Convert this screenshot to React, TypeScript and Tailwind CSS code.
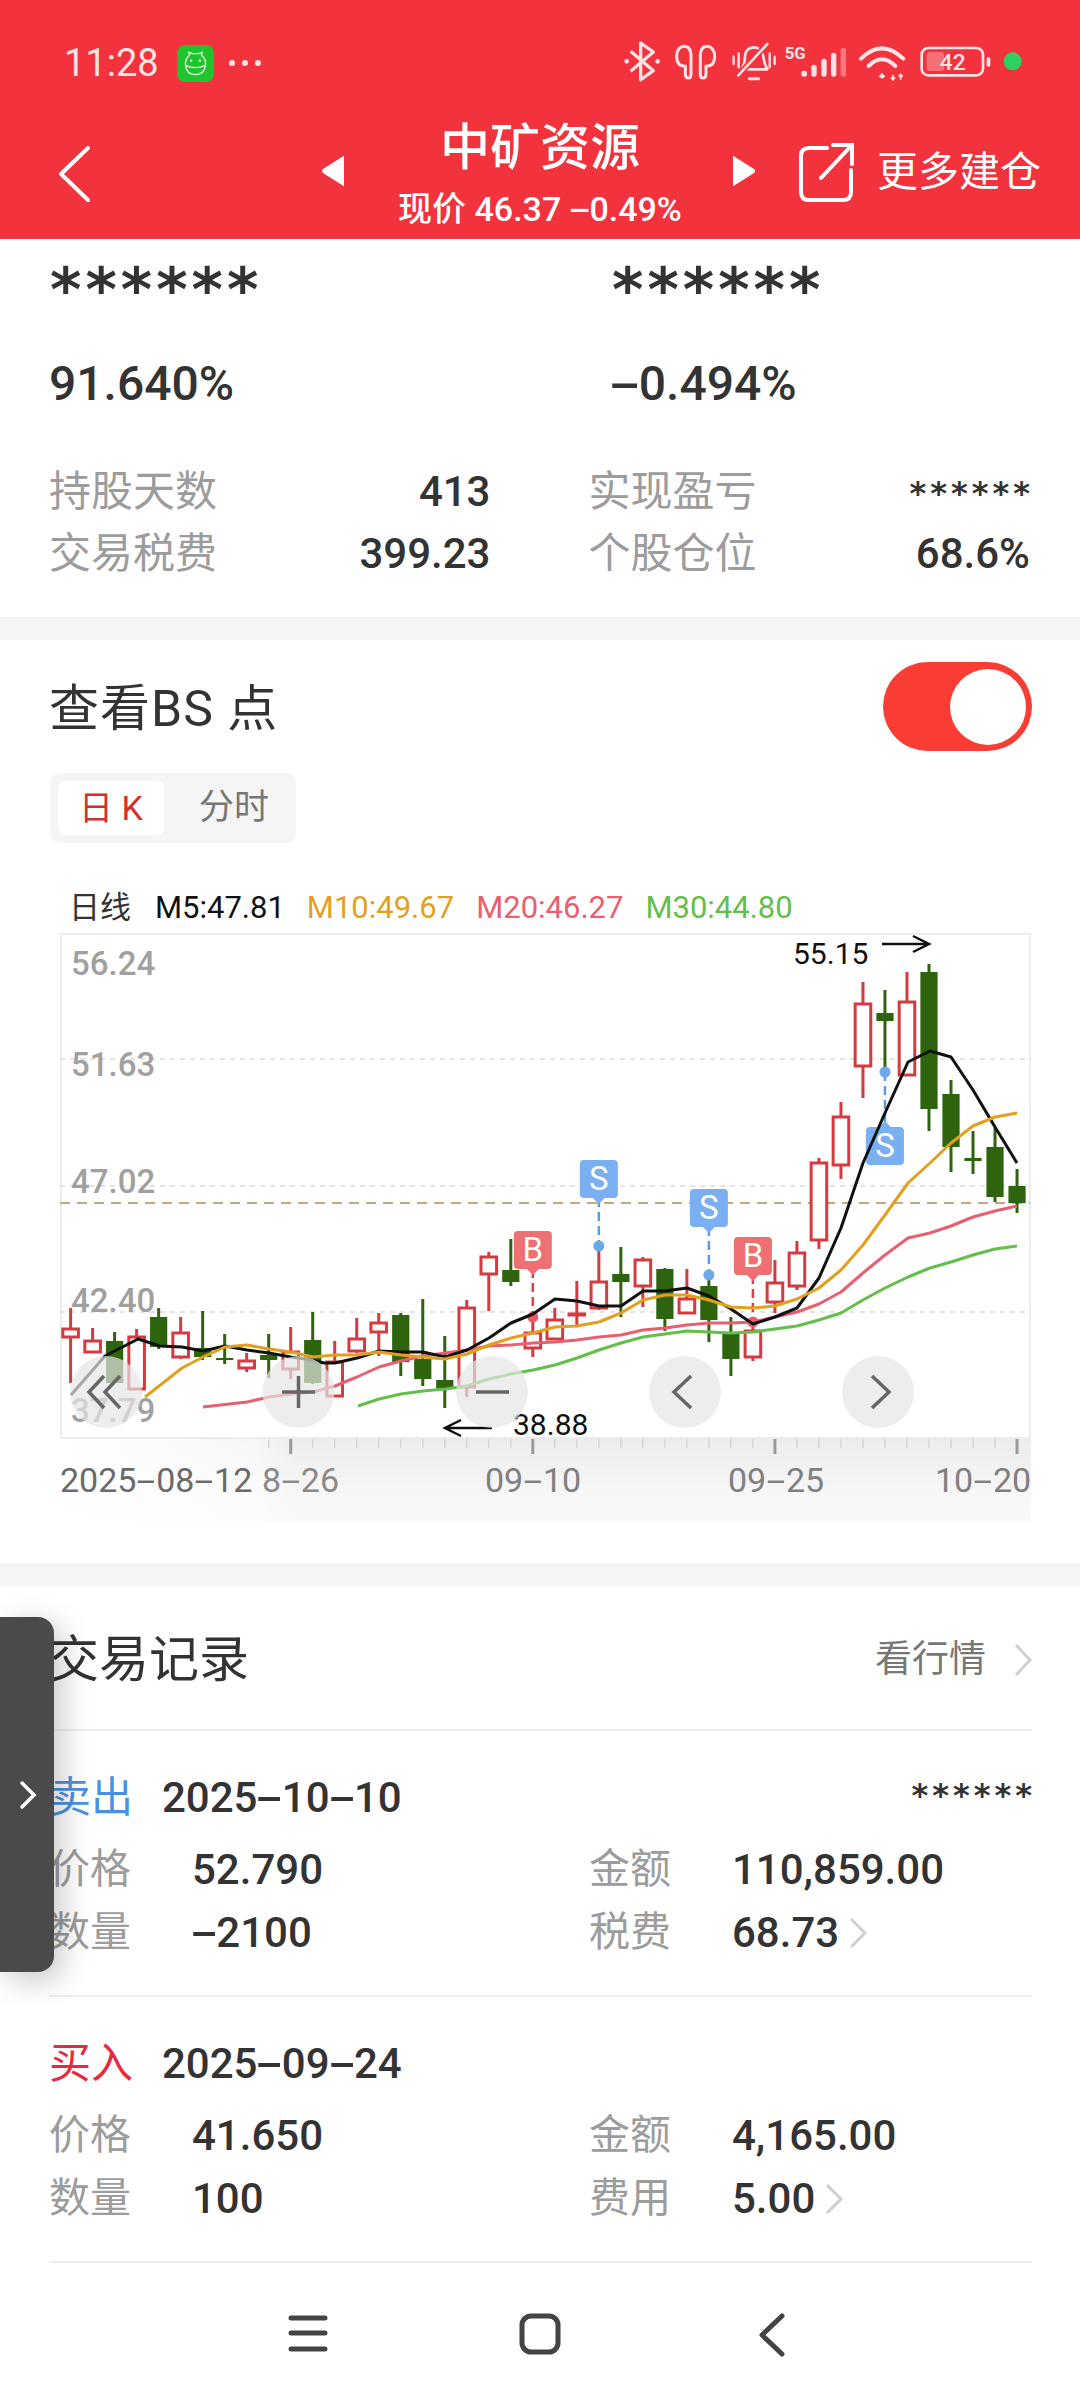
import { Fragment } from 'react'

type Candle = { up: boolean; wick: [number, number]; body: [number, number] }

const CANDLE_X0 = 70.6
const CANDLE_STEP = 22.01
const candleX = (i: number) => CANDLE_X0 + i * CANDLE_STEP

// [up, wick top, wick bottom, body top, body bottom] in page pixels
const rawCandles: [boolean, number, number, number, number][] = [
  [true, 1308, 1383, 1329, 1337],
  [true, 1328, 1353, 1341, 1352],
  [false, 1332, 1383, 1341, 1383],
  [true, 1329, 1389, 1337, 1389],
  [false, 1308, 1349, 1317, 1347],
  [true, 1317, 1359, 1333, 1357],
  [false, 1311, 1360, 1348, 1357],
  [false, 1334, 1364, 1358, 1360],
  [true, 1353, 1372, 1361, 1368],
  [false, 1334, 1378, 1355, 1360],
  [true, 1327, 1379, 1352, 1369],
  [false, 1312, 1384, 1340, 1383],
  [true, 1341, 1396, 1362, 1396],
  [true, 1318, 1353, 1339, 1351],
  [true, 1313, 1356, 1323, 1332],
  [false, 1313, 1376, 1315, 1362],
  [false, 1299, 1386, 1359, 1379],
  [false, 1336, 1408, 1380, 1389],
  [true, 1300, 1397, 1308, 1387],
  [true, 1252, 1311, 1257, 1274],
  [false, 1239, 1286, 1270, 1282],
  [true, 1317, 1357, 1333, 1348],
  [true, 1308, 1340, 1320, 1339],
  [true, 1281, 1325, 1314, 1315],
  [true, 1247, 1310, 1282, 1308],
  [false, 1247, 1317, 1274, 1282],
  [true, 1257, 1307, 1260, 1286],
  [false, 1268, 1331, 1269, 1319],
  [true, 1269, 1314, 1299, 1313],
  [false, 1276, 1342, 1286, 1320],
  [false, 1317, 1376, 1333, 1359],
  [true, 1320, 1361, 1331, 1357],
  [true, 1260, 1313, 1283, 1302],
  [true, 1241, 1290, 1253, 1286],
  [true, 1158, 1249, 1163, 1240],
  [true, 1102, 1179, 1117, 1165],
  [true, 982, 1098, 1004, 1066],
  [false, 990, 1068, 1013, 1021],
  [true, 972, 1075, 1002, 1075],
  [false, 964, 1131, 972, 1109],
  [false, 1080, 1172, 1094, 1147],
  [false, 1131, 1174, 1158, 1161],
  [false, 1128, 1202, 1147, 1197],
  [false, 1169, 1213, 1186, 1203],
]

const candles: Candle[] = rawCandles.map(([up, a, b, c, d]) => ({ up, wick: [a, b], body: [c, d] }))

const m5 =
  '71,1395 105,1356 138,1339 160,1346 182,1347 203,1351 225,1346 247,1350 269,1353 291,1357 313,1360 324,1363 335,1363 357,1358 379,1351 401,1352 423,1352 445,1357 467,1350 489,1338 511,1323 533,1314 555,1299 577,1301 599,1306 621,1306 643,1291 665,1291 687,1288 709,1296 731,1309 753,1324 775,1317 797,1308 819,1278 841,1228 863,1163 885,1113 908,1062 930,1051 951,1057 973,1090 995,1127 1017,1163'
const m10 =
  '145,1397 182,1368 203,1357 225,1347 247,1345 269,1349 291,1352 313,1357 335,1355 357,1355 379,1352 401,1355 423,1357 445,1359 467,1354 489,1345 511,1338 533,1333 555,1327 577,1326 599,1322 621,1313 643,1300 665,1295 687,1295 709,1300 731,1307 753,1308 775,1306 797,1299 819,1288 841,1270 863,1245 885,1215 908,1183 930,1163 951,1143 973,1126 995,1117 1017,1113'
const m20 =
  '203,1407 247,1402 269,1397 291,1394 313,1392 335,1386 357,1377 379,1367 401,1361 423,1356 445,1353 467,1350 489,1346 511,1345 533,1343 555,1342 577,1340 599,1337 621,1335 643,1330 665,1328 687,1325 709,1323 731,1323 753,1322 775,1317 797,1312 819,1304 841,1292 863,1273 885,1255 908,1238 930,1233 951,1226 973,1217 995,1211 1017,1206'
const m30 =
  '358,1406 379,1399 401,1394 423,1391 445,1389 467,1386 489,1379 511,1374 533,1370 555,1365 577,1358 599,1350 621,1343 643,1337 665,1334 687,1331 709,1332 731,1333 753,1332 775,1329 797,1326 819,1320 841,1313 863,1300 885,1288 908,1277 930,1268 951,1262 973,1255 995,1249 1017,1246'

const priceLabels = [
  { text: '56.24', y: 975 },
  { text: '51.63', y: 1076 },
  { text: '47.02', y: 1193 },
  { text: '42.40', y: 1312 },
  { text: '37.79', y: 1422 },
]

// Widens the hyphens so numbers read like the app's DIN style face
function Hyphened({ text }: { text: string }) {
  return (
    <>
      {text.split('-').map((part, i) => (
        <Fragment key={i}>
          {i > 0 && <span className="inline-block w-[0.58em] scale-x-[2] text-center">-</span>}
          {part}
        </Fragment>
      ))}
    </>
  )
}

function FrogBadge() {
  return (
    <svg width="37" height="37" viewBox="405 47 110 111" fill="none">
      <rect x="405" y="47" width="110" height="111" rx="24" fill="#1fc62b" />
      <path
        d="M442 78 L440 69 L450 73 H470 L480 69 L478 78 Q492 90 490 108 Q486 136 460 136 Q434 136 430 108 Q428 90 442 78 Z"
        stroke="#e9fbe9"
        strokeWidth="4"
      />
      <path d="M430 108 Q460 122 490 108" stroke="#e9fbe9" strokeWidth="4" />
      <circle cx="447" cy="94" r="3.5" fill="#e9fbe9" />
      <circle cx="473" cy="94" r="3.5" fill="#e9fbe9" />
    </svg>
  )
}

function StatusIcons() {
  const c = '#fde3e5'
  return (
    <svg width="420" height="70" viewBox="0 0 1260 210" fill="none">
      {/* bluetooth */}
      <circle cx="50" cy="100" r="7" fill={c} />
      <circle cx="143" cy="100" r="7" fill={c} />
      <path d="M62 70 L130 128 L92 155 V45 L130 72 L62 130" stroke={c} strokeWidth="10" strokeLinejoin="round" />
      {/* earbuds */}
      <path
        d="M226 115 C206 115 200 100 200 85 C200 65 212 55 222 55 C238 55 243 70 243 85 V138 Q243 150 235 150 Q226 150 226 138 Z"
        stroke={c}
        strokeWidth="9"
      />
      <path
        d="M226 115 C206 115 200 100 200 85 C200 65 212 55 222 55 C238 55 243 70 243 85 V138 Q243 150 235 150 Q226 150 226 138 Z"
        stroke={c}
        strokeWidth="9"
        transform="translate(514 0) scale(-1 1)"
      />
      {/* muted bell */}
      <path d="M395 124 Q405 106 405 86 C405 66 420 58 432 58 C447 58 458 70 460 86 Q462 106 472 124 Z" stroke={c} strokeWidth="8" strokeLinejoin="round" />
      <path d="M418 152 H446" stroke={c} strokeWidth="9" strokeLinecap="round" />
      <path d="M385 142 L472 48" stroke="#f2323c" strokeWidth="18" />
      <path d="M385 142 L472 48" stroke={c} strokeWidth="8" strokeLinecap="round" />
      <path d="M371 86 V108 M386 76 V118 M479 76 V118 M494 86 V108" stroke={c} strokeWidth="7" strokeLinecap="round" />
      {/* cellular */}
      <text x="524" y="94" fontSize="50" fontWeight="700" fill={c}>
        5G
      </text>
      <rect x="574" y="128" width="17" height="18" rx="8" fill={c} />
      <rect x="604" y="110" width="16" height="36" rx="8" fill={c} />
      <rect x="634" y="92" width="16" height="54" rx="8" fill={c} />
      <rect x="663" y="74" width="16" height="72" rx="8" fill={c} />
      <rect x="692" y="60" width="16" height="86" rx="6" fill={c} fillOpacity="0.4" />
      {/* wifi */}
      <path d="M753 92 Q815 30 880 92" stroke={c} strokeWidth="12" strokeLinecap="round" />
      <path d="M776 114 Q815 74 856 114" stroke={c} strokeWidth="12" strokeLinecap="round" />
      <path d="M806 146 L816 134 L826 146 L816 152 Z" fill={c} />
      <path d="M849 140 V154 M843 148 L849 155 L855 148 M872 155 V140 M866 146 L872 139 L878 146" stroke={c} strokeWidth="5" />
      {/* battery */}
      <rect x="935" y="60" width="184" height="82" rx="20" stroke={c} strokeWidth="8" />
      <rect x="950" y="72" width="52" height="57" rx="8" fill={c} fillOpacity="0.35" />
      <text x="1028" y="127" fontSize="68" fontWeight="500" textAnchor="middle" fill={c}>
        42
      </text>
      <rect x="1130" y="87" width="11" height="29" rx="5" fill={c} />
      <circle cx="1208" cy="100" r="27" fill="#2fd063" />
    </svg>
  )
}

function Header() {
  return (
    <header className="h-[239px] w-full bg-[#f2323c] text-white">
      <div className="flex h-[126px] items-center pl-[64px] pr-[50px]">
        <span className="text-[38px] text-[#fde3e5]">11:28</span>
        <span className="ml-[18px] flex">
          <FrogBadge />
        </span>
        <span className="ml-[15px] flex gap-[7px]">
          <i className="size-[6px] rounded-full bg-[#fde3e5]" />
          <i className="size-[6px] rounded-full bg-[#fde3e5]" />
          <i className="size-[6px] rounded-full bg-[#fde3e5]" />
        </span>
        <span className="ml-auto flex">
          <StatusIcons />
        </span>
      </div>
      <div className="flex h-[113px] items-start">
        <svg className="ml-[58px] mt-[19px]" width="34" height="58" viewBox="0 0 34 58" fill="none">
          <path d="M30 3 L3 29 L30 55" stroke="#fff" strokeWidth="4" strokeLinecap="round" strokeLinejoin="round" />
        </svg>
        <svg className="ml-[228px] mt-[29px]" width="26" height="32" viewBox="0 0 26 32">
          <path d="M24 2 V30 Q24 32 22 30 L3 18 Q1 16 3 14 L22 2 Q24 0 24 2 Z" fill="#fff" />
        </svg>
        <div className="ml-[52px] flex w-[284px] flex-col items-center">
          <span className="h-[52px] text-[50px] font-medium leading-[44px]">中矿资源</span>
          <span className="mt-[9px] whitespace-nowrap text-[34px] font-medium leading-[44px]">
            现价 46.37 <Hyphened text="-0.49%" />
          </span>
        </div>
        <svg className="ml-[49px] mt-[29px]" width="26" height="32" viewBox="0 0 26 32">
          <path d="M2 2 V30 Q2 32 4 30 L23 18 Q25 16 23 14 L4 2 Q2 0 2 2 Z" fill="#fff" />
        </svg>
        <svg className="ml-[40px] mt-[16px]" width="60" height="62" viewBox="0 0 60 62" fill="none">
          <path d="M30 6 H12 Q4 6 4 14 V50 Q4 58 12 58 H46 Q54 58 54 50 V28" stroke="#fff" strokeWidth="4" strokeLinecap="round" />
          <path d="M24 36 L54 4 M36 3 H55 V22" stroke="#fff" strokeWidth="4" strokeLinecap="round" />
        </svg>
        <span className="ml-[20px] mt-[23px] whitespace-nowrap text-[41px] leading-[46px]">更多建仓</span>
      </div>
    </header>
  )
}

function Stars({ className }: { className: string }) {
  return <span className={`font-['DejaVu_Sans',sans-serif] ${className}`}>******</span>
}

function Metric({ label, value, stars }: { label: string; value?: string; stars?: boolean }) {
  return (
    <div className="flex h-[62px] items-center justify-between">
      <span className="text-[42px] text-[#9c9c9c]">{label}</span>
      {stars ? <Stars className="mr-[-4px] pt-[4px] text-[32px] font-bold tracking-[4px] text-[#333]" /> : <span className="text-[42px] font-medium text-[#333]">{value}</span>}
    </div>
  )
}

function Summary() {
  return (
    <section className="h-[378px] pt-[26px]">
      <div className="grid grid-cols-[562px_1fr] pl-[50px]">
        <Stars className="h-[50px] text-[60px] font-bold leading-[50px] tracking-[4px] text-[#333]" />
        <Stars className="h-[50px] text-[60px] font-bold leading-[50px] tracking-[4px] text-[#333]" />
      </div>
      <div className="mt-[33px] grid h-[60px] grid-cols-[562px_1fr] items-center pl-[49px] text-[48px] font-medium text-[#333]">
        <span>91.640%</span>
        <span>
          <Hyphened text="-0.494%" />
        </span>
      </div>
      <div className="mt-[52px] grid grid-cols-2 gap-x-[98px] pl-[49px] pr-[50px]">
        <Metric label="持股天数" value="413" />
        <Metric label="实现盈亏" stars />
        <Metric label="交易税费" value="399.23" />
        <Metric label="个股仓位" value="68.6%" />
      </div>
    </section>
  )
}

function BubbleMarker({
  i,
  letter,
  top,
  dotY,
  below,
}: {
  i: number
  letter: 'S' | 'B'
  top: number
  dotY: number
  below?: boolean
}) {
  const x = candleX(i)
  const fill = letter === 'S' ? '#7ab0f1' : '#ee7072'
  const line = letter === 'S' ? '#5a9be3' : '#d9404a'
  const dot = letter === 'S' ? '#6ea8ea' : '#ee5a66'
  return (
    <g>
      <path
        d={below ? `M${x} ${dotY} V${top}` : `M${x} ${top + 38} V${dotY}`}
        stroke={line}
        strokeWidth="2.5"
        strokeDasharray="9 5"
      />
      <circle cx={x} cy={dotY} r="5.5" fill={dot} />
      <rect x={x - 19} y={top} width="38" height="38" rx="4" fill={fill} />
      <path
        d={below ? `M${x - 7} ${top + 1} L${x} ${top - 6} L${x + 7} ${top + 1} Z` : `M${x - 7} ${top + 37} L${x} ${top + 44} L${x + 7} ${top + 37} Z`}
        fill={fill}
      />
      <text x={x} y={top + 30} textAnchor="middle" fontSize="33" fill="#fff">
        {letter}
      </text>
    </g>
  )
}

function RoundButton({ cx, d }: { cx: number; d: string }) {
  return (
    <g>
      <circle cx={cx} cy="1392" r="36" fill="#e6e6e6" fillOpacity="0.7" />
      <path d={d} stroke="#666" strokeWidth="3.5" fill="none" />
    </g>
  )
}

function KChart() {
  return (
    <svg className="block" width="1080" height="598" viewBox="0 932 1080 598" fill="none">
      <defs>
        <linearGradient id="stripV" x1="0" y1="0" x2="0" y2="1">
          <stop offset="0" stopColor="#ececec" />
          <stop offset="0.6" stopColor="#f6f6f6" />
          <stop offset="1" stopColor="#f9f9f9" />
        </linearGradient>
        <linearGradient id="stripFade" x1="0" y1="0" x2="1" y2="0">
          <stop offset="0" stopColor="#fff" />
          <stop offset="0.8" stopColor="#fff" stopOpacity="0.55" />
          <stop offset="1" stopColor="#fff" stopOpacity="0" />
        </linearGradient>
      </defs>

      <rect x="60" y="1438" width="971" height="84" fill="url(#stripV)" />
      <rect x="60" y="1438" width="240" height="84" fill="url(#stripFade)" />

      <rect x="61" y="934" width="969" height="504" fill="#fff" stroke="#ececec" strokeWidth="2" />
      <path d="M60 1059 H1030 M60 1186 H1030 M60 1312 H1030" stroke="#dcdcdc" strokeWidth="1.5" strokeDasharray="5 5" />
      <path d="M60 1203 H1030" stroke="#c4a882" strokeWidth="2" strokeDasharray="10 7" />

      {priceLabels.map((p) => (
        <text key={p.text} x="71" y={p.y} fontSize="33" fontWeight="500" fill="#a0a0a0">
          {p.text}
        </text>
      ))}

      {candles.map((c, i) => {
        const x = candleX(i)
        const color = c.up ? '#d43a3e' : '#2f640f'
        return (
          <g key={i}>
            <path d={`M${x} ${c.wick[0]} V${c.wick[1]}`} stroke={color} strokeWidth="3" />
            {c.up ? (
              <rect x={x - 7.8} y={c.body[0]} width="15.6" height={c.body[1] - c.body[0]} fill="#fff" stroke={color} strokeWidth="3" />
            ) : (
              <rect x={x - 8.6} y={c.body[0]} width="17.2" height={c.body[1] - c.body[0]} fill={color} />
            )}
          </g>
        )
      })}

      <BubbleMarker i={21} letter="B" top={1231} dotY={1317} />
      <BubbleMarker i={24} letter="S" top={1160} dotY={1246} />
      <BubbleMarker i={29} letter="S" top={1189} dotY={1275} />
      <BubbleMarker i={31} letter="B" top={1237} dotY={1322} />
      <BubbleMarker i={37} letter="S" top={1127} dotY={1072} below />

      <polyline points={m30} stroke="#63be4a" strokeWidth="3" strokeLinejoin="round" />
      <polyline points={m20} stroke="#e8606f" strokeWidth="3" strokeLinejoin="round" />
      <polyline points={m5} stroke="#111" strokeWidth="3" strokeLinejoin="round" />
      <polyline points={m10} stroke="#e3a01f" strokeWidth="3" strokeLinejoin="round" />

      {/* high / low callouts */}
      <text x="793" y="964" fontSize="30" fill="#111">
        55.15
      </text>
      <path d="M882 944 H928 M913 936 L929 944 L913 952" stroke="#111" strokeWidth="2.5" />
      <text x="513" y="1435" fontSize="30" fill="#111">
        38.88
      </text>
      <path d="M492 1428 H446 M461 1420 L445 1428 L461 1436" stroke="#111" strokeWidth="2.5" />

      {/* zoom and pan buttons */}
      <RoundButton cx={106} d="M104 1376 L89 1392 L104 1408 M120 1376 L105 1392 L120 1408" />
      <RoundButton cx={298.5} d="M282 1392 H315 M298.5 1376 V1408" />
      <RoundButton cx={492} d="M476 1392 H509" />
      <RoundButton cx={685} d="M691 1376 L674 1392 L691 1408" />
      <RoundButton cx={878} d="M872 1376 L889 1392 L872 1408" />

      {/* date ruler */}
      {candles.map((_, i) => {
        if (i < 9) return null
        const major = i === 10 || i === 21 || i === 32 || i === 43
        return (
          <path
            key={i}
            d={`M${candleX(i)} 1439 V${major ? 1454 : 1448}`}
            stroke={major ? '#999' : '#cfcfcf'}
            strokeWidth={major ? 3 : 1.2}
          />
        )
      })}
    </svg>
  )
}

function DateLabel({ text, className }: { text: string; className: string }) {
  return (
    <span className={`absolute top-[526px] whitespace-nowrap text-[34px] leading-[44px] ${className}`}>
      <Hyphened text={text} />
    </span>
  )
}

function BsSection() {
  return (
    <section className="h-[923px] pt-[22px]">
      <div className="flex h-[89px] items-center justify-between pl-[49px] pr-[48px]">
        <h2 className="pt-[5px] text-[50px] font-normal tracking-[1px] text-[#333]">查看BS 点</h2>
        <div className="flex h-[89px] w-[149px] items-center justify-end rounded-full bg-[#f93d35] pr-[6px]">
          <div className="size-[76px] rounded-full bg-white" />
        </div>
      </div>
      <div className="ml-[50px] mt-[22px] flex h-[70px] w-[246px] items-center rounded-[10px] bg-[#f5f5f5] pl-[8px]">
        <span className="flex h-[54px] w-[106px] items-center justify-center rounded-[8px] bg-white text-[34px] text-[#d32f2f]">日 K</span>
        <span className="ml-[35px] text-[35px] text-[#777]">分时</span>
      </div>
      <div className="ml-[69px] mt-[42px] flex h-[47px] items-center gap-[22px] whitespace-nowrap text-[31px]">
        <span className="mr-[2px] text-[31px] text-[#333]">日线</span>
        <span className="text-[#111]">M5:47.81</span>
        <span className="text-[#e3a01f]">M10:49.67</span>
        <span className="text-[#e8606f]">M20:46.27</span>
        <span className="text-[#63be4a]">M30:44.80</span>
      </div>
      <div className="relative">
        <KChart />
        <DateLabel text="8-26" className="left-[262px] text-[#8a8a8a]" />
        <DateLabel text="2025-08-12" className="left-[60px] text-[#6a6a6a]" />
        <DateLabel text="09-10" className="left-[485px] text-[#808080]" />
        <DateLabel text="09-25" className="left-[728px] text-[#808080]" />
        <DateLabel text="10-20" className="left-[935px] text-[#808080]" />
      </div>
    </section>
  )
}

function SmallChevron() {
  return (
    <svg className="ml-[10px]" width="18" height="32" viewBox="0 0 18 32" fill="none">
      <path d="M2 2 L16 16 L2 30" stroke="#cfcfcf" strokeWidth="3" />
    </svg>
  )
}

type Trade = {
  side: string
  sideClass: string
  date: string
  stars?: boolean
  price: string
  qty: string
  amount: string
  feeLabel: string
  fee: string
}

const trades: Trade[] = [
  { side: '卖出', sideClass: 'text-[#4a90e2]', date: '2025-10-10', stars: true, price: '52.790', qty: '-2100', amount: '110,859.00', feeLabel: '税费', fee: '68.73' },
  { side: '买入', sideClass: 'text-[#e8283c]', date: '2025-09-24', price: '41.650', qty: '100', amount: '4,165.00', feeLabel: '费用', fee: '5.00' },
]

function TradeCell({ label, children }: { label: string; children: React.ReactNode }) {
  return (
    <div className="flex h-[63px] items-center text-[42px] font-medium text-[#333]">
      <span className="w-[143px] shrink-0 text-[41px] font-normal text-[#9c9c9c]">{label}</span>
      {children}
    </div>
  )
}

function TradeRow({ trade }: { trade: Trade }) {
  return (
    <div className="h-[266px] border-b-2 border-[#eeeeee]">
      <div className="flex h-[104px] items-end pb-[6px]">
        <span className={`w-[113px] text-[42px] ${trade.sideClass}`}>{trade.side}</span>
        <span className="text-[42px] font-medium text-[#333]">
          <Hyphened text={trade.date} />
        </span>
        {trade.stars && <Stars className="mb-[10px] ml-auto mr-[-4px] text-[32px] font-bold tracking-[4px] text-[#333]" />}
      </div>
      <div className="mt-[3px] grid grid-cols-[540px_1fr]">
        <TradeCell label="价格">{trade.price}</TradeCell>
        <TradeCell label="金额">{trade.amount}</TradeCell>
        <TradeCell label="数量">
          <Hyphened text={trade.qty} />
        </TradeCell>
        <TradeCell label={trade.feeLabel}>
          {trade.fee}
          <SmallChevron />
        </TradeCell>
      </div>
    </div>
  )
}

function TradeSection() {
  return (
    <section className="pl-[49px] pr-[48px]">
      <div className="flex h-[145px] items-center border-b-2 border-[#eeeeee] pt-[5px]">
        <h2 className="text-[50px] font-normal text-[#333]">交易记录</h2>
        <span className="ml-auto text-[37px] text-[#777]">看行情</span>
        <svg className="ml-[28px]" width="18" height="34" viewBox="0 0 18 34" fill="none">
          <path d="M2 2 L16 17 L2 32" stroke="#cfcfcf" strokeWidth="3" />
        </svg>
      </div>
      {trades.map((t) => (
        <TradeRow key={t.date} trade={t} />
      ))}
    </section>
  )
}

function NavBar() {
  return (
    <nav className="flex h-[137px] items-start justify-center pt-[50px]">
      <svg className="absolute left-[287px]" width="42" height="42" viewBox="0 0 42 42" fill="none">
        <path d="M4 5 H38 M4 20 H38 M4 36 H38" stroke="#444" strokeWidth="5" strokeLinecap="round" />
      </svg>
      <svg className="absolute left-[518px]" width="44" height="42" viewBox="0 0 44 42" fill="none">
        <rect x="4" y="3" width="36" height="36" rx="9" stroke="#444" strokeWidth="5" />
      </svg>
      <svg className="absolute left-[757px]" width="30" height="44" viewBox="0 0 30 44" fill="none">
        <path d="M25 3 L5 22 L25 41" stroke="#444" strokeWidth="5" strokeLinecap="round" strokeLinejoin="round" />
      </svg>
    </nav>
  )
}

export default function App() {
  return (
    <div className="relative h-[2400px] w-[1080px] overflow-hidden bg-white font-['Roboto','Noto_Sans_CJK_SC',sans-serif]">
      <Header />
      <Summary />
      <div className="h-[23px] bg-[#f5f5f5]" />
      <BsSection />
      <div className="h-[23px] bg-[#f5f5f5]" />
      <TradeSection />
      <NavBar />

      {/* slide-out drawer handle */}
      <div className="absolute left-0 top-[1617px] flex h-[355px] w-[54px] items-center justify-end rounded-r-[16px] bg-[#4a4a4a] pr-[17px] shadow-[8px_8px_30px_rgba(0,0,0,0.22)]">
        <svg width="18" height="30" viewBox="0 0 18 30" fill="none">
          <path d="M3 3 L15 15 L3 27" stroke="#fff" strokeWidth="3.5" strokeLinecap="round" />
        </svg>
      </div>
    </div>
  )
}
